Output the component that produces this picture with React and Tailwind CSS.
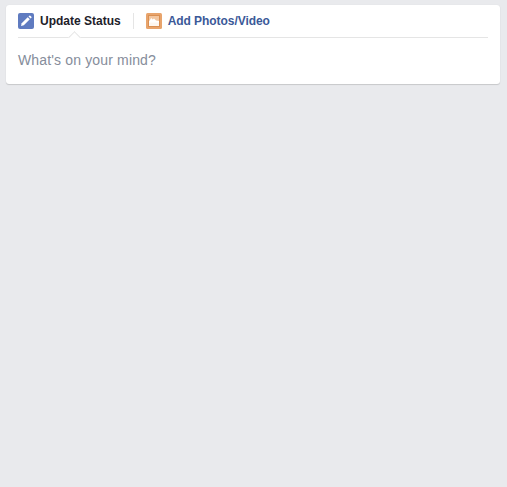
export default function App() {
  return (
    <div className="min-h-[487px] bg-[#e9eaed] pr-[7px] pl-[6px] pt-[5px] font-['Liberation_Sans',Arial,sans-serif]">
      <div className="h-[79px] rounded-[3px] bg-white px-3 shadow-[0_1px_1px_rgba(0,0,0,0.14),0_0_1px_rgba(0,0,0,0.1)]">
        <div className="relative flex h-[33px] items-center border-b border-[#e5e5e5]">
          <div className="flex items-center gap-[6px] pr-3">
            <svg width="16" height="16" viewBox="0 0 16 16" className="shrink-0">
              <rect x="0" y="0" width="16" height="16" rx="2" fill="#5f7bc0" />
              <path d="M3 13l.7-2.800 6-6 2.100 2.100-6 6z" fill="#fff" />
              <path d="M10.500 3.500l.8-.8a.7.7 0 0 1 1 0l1.100 1.100a.7.7 0 0 1 0 1l-.8.8z" fill="#fff" />
            </svg>
            <span className="text-[12px] leading-4 font-bold text-[#1d2129]">Update Status</span>
          </div>
          <div className="h-4 w-px bg-[#e5e5e5]" />
          <div className="flex items-center gap-[6px] pl-3">
            <svg width="16" height="16" viewBox="0 0 16 16" className="shrink-0">
              <rect x="0" y="0" width="16" height="16" rx="1.500" fill="#e8a46c" />
              <rect x="2" y="2" width="12" height="12" fill="#fdf6ef" />
              <rect x="2.500" y="2.500" width="11" height="11" fill="none" stroke="#d98f52" strokeWidth="1" />
              <rect x="3" y="3" width="10" height="5.500" fill="#f3c69f" />
              <path d="M3 8.500l2.200-3.500 1.500 1.500 1.300-1 2 2 3 .5v1.500h-10z" fill="#fff" />
            </svg>
            <span className="text-[12px] leading-4 font-bold tracking-[-0.06px] text-[#3b5998]">Add Photos/Video</span>
          </div>
          <div className="absolute bottom-[-5px] left-[52px] h-[9px] w-[9px] rotate-45 border-t border-l border-[#e5e5e5] bg-white" />
        </div>
        <div className="pt-[13px] text-[14px] leading-[18px] tracking-[0.15px] text-[#868d9b]">What's on your mind?</div>
      </div>
    </div>
  );
}
